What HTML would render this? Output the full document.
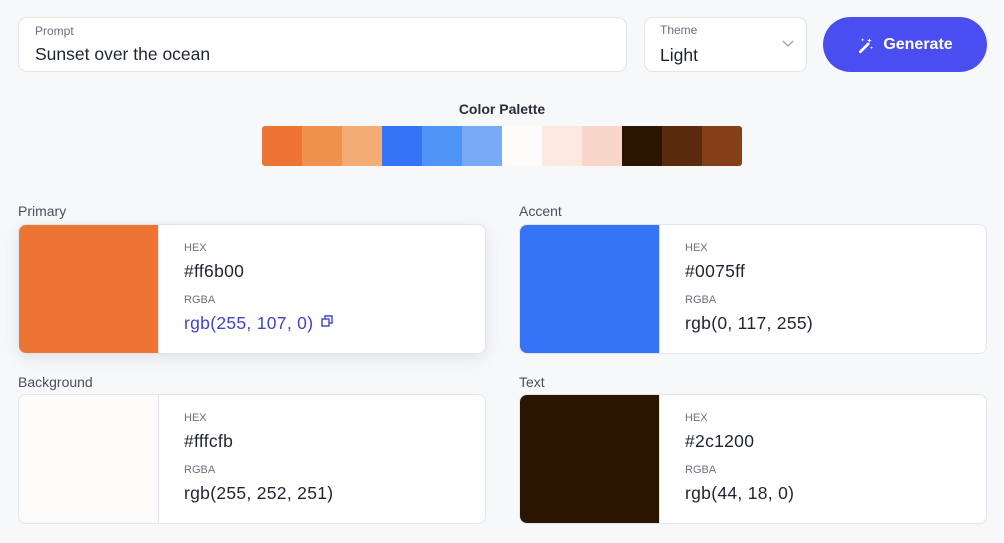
<!DOCTYPE html>
<html><head><style>
*{box-sizing:border-box;margin:0;padding:0}
body{width:1004px;height:543px;background:#f7f8fa;font-family:"Liberation Sans",sans-serif;position:relative;overflow:hidden;color:#1f2433}
.box{position:absolute;background:#fff;border:1px solid #e3e5ea;border-radius:9px}
.lab{position:absolute;font-size:12px;color:#6b7080}
.val{position:absolute;font-size:17.5px;color:#1f2433}
.btn{position:absolute;left:823px;top:17px;width:164px;height:55px;border-radius:28px;background:#4a4ef0;color:#fff;font-size:16px;font-weight:bold;display:flex;align-items:center;justify-content:center;gap:8px}
.strip{position:absolute;left:262px;top:126px;width:480px;height:40px;display:flex;border-radius:3px;overflow:hidden}
.strip div{flex:1}
.sec{position:absolute;font-size:14px;color:#4a4f5e}
.card{position:absolute;width:468px;height:130px;background:#fff;border:1px solid #e3e5ea;border-radius:8px;overflow:hidden}
.card .sw{position:absolute;left:0;top:0;width:140px;height:100%;border-right:1px solid #e3e5ea}
.card .k{position:absolute;left:165px;font-size:11px;color:#6b7080}
.card .v{position:absolute;left:165px;font-size:17.5px;color:#1f2433;letter-spacing:.3px}
</style></head><body>
<div class="box" style="left:18px;top:17px;width:609px;height:55px"></div>
<div class="lab" style="left:35px;top:24px">Prompt</div>
<div class="val" style="left:35px;top:44px">Sunset over the ocean</div>
<div class="box" style="left:644px;top:17px;width:163px;height:55px"></div>
<div class="lab" style="left:660px;top:23px">Theme</div>
<div class="val" style="left:660px;top:45px">Light</div>
<svg style="position:absolute;left:782px;top:40px" width="12" height="8" viewBox="0 0 12 8"><path d="M1 1l5 5 5-5" fill="none" stroke="#9aa0ad" stroke-width="1.3"/></svg>
<div class="btn"><svg width="18" height="18" viewBox="0 0 16 16"><path d="M3 14L10 7" stroke="#fff" stroke-width="2.4" stroke-linecap="round"/><path d="M11 2l.6 1.4L13 4l-1.4.6L11 6l-.6-1.4L9 4l1.4-.6z M5 2l.4 1 1 .4-1 .4L5 5l-.4-1.2-1-.4 1-.4z M13 9l.4 1 1 .4-1 .4-.4 1-.4-1-1-.4 1-.4z" fill="#fff"/></svg>Generate</div>
<div style="position:absolute;left:0;width:1004px;top:101px;text-align:center;font-size:14px;font-weight:bold;color:#2a2e3a">Color Palette</div>
<div class="strip">
<div style="background:#ed7432"></div><div style="background:#f0924b"></div><div style="background:#f3ad74"></div><div style="background:#3574f6"></div><div style="background:#5094f7"></div><div style="background:#79aaf8"></div><div style="background:#fefcfb"></div><div style="background:#fce9e2"></div><div style="background:#f8d7ca"></div><div style="background:#2a1500"></div><div style="background:#5a2b0c"></div><div style="background:#844019"></div>
</div>
<div class="sec" style="left:18px;top:203px">Primary</div>
<div class="card" style="left:18px;top:224px;box-shadow:0 4px 14px rgba(60,70,120,.12)"><div class="sw" style="background:#ed7432"></div>
<div class="k" style="top:17px">HEX</div><div class="v" style="top:36px">#ff6b00</div>
<div class="k" style="top:69px">RGBA</div><div class="v" style="top:88px;color:#3f44c9">rgb(255, 107, 0)</div>
<svg style="position:absolute;left:302px;top:90px" width="13" height="13" viewBox="0 0 13 13"><rect x="1" y="4" width="7" height="7" fill="none" stroke="#3f44c9" stroke-width="1.4"/><path d="M4 4V1h7v7H8" fill="none" stroke="#3f44c9" stroke-width="1.4"/></svg></div>
<div class="sec" style="left:519px;top:203px">Accent</div>
<div class="card" style="left:519px;top:224px"><div class="sw" style="background:#3574f6"></div>
<div class="k" style="top:17px">HEX</div><div class="v" style="top:36px">#0075ff</div>
<div class="k" style="top:69px">RGBA</div><div class="v" style="top:88px">rgb(0, 117, 255)</div></div>
<div class="sec" style="left:18px;top:374px">Background</div>
<div class="card" style="left:18px;top:394px"><div class="sw" style="background:#fefcfb"></div>
<div class="k" style="top:17px">HEX</div><div class="v" style="top:36px">#fffcfb</div>
<div class="k" style="top:69px">RGBA</div><div class="v" style="top:88px">rgb(255, 252, 251)</div></div>
<div class="sec" style="left:519px;top:374px">Text</div>
<div class="card" style="left:519px;top:394px"><div class="sw" style="background:#2a1500"></div>
<div class="k" style="top:17px">HEX</div><div class="v" style="top:36px">#2c1200</div>
<div class="k" style="top:69px">RGBA</div><div class="v" style="top:88px">rgb(44, 18, 0)</div></div>
</body></html>
